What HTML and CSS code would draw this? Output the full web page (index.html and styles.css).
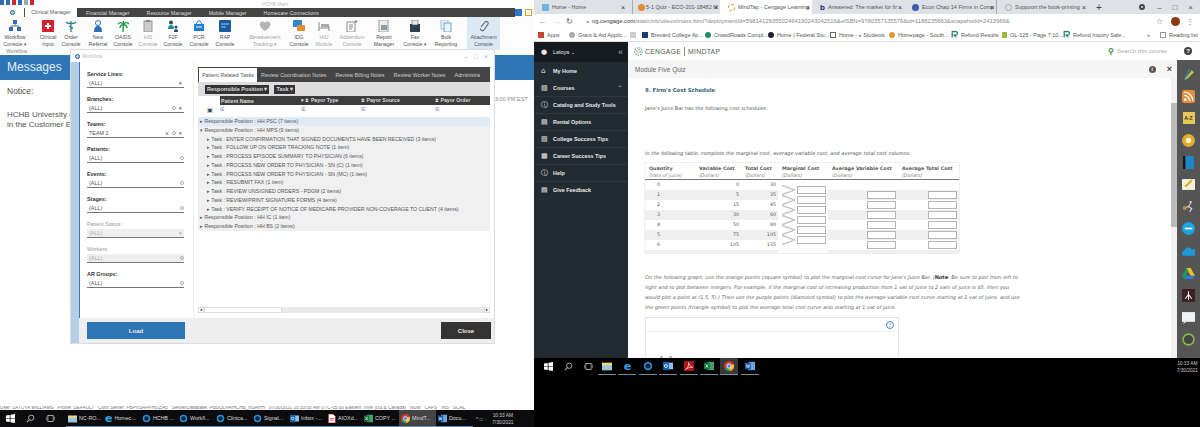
FILE: index.html
```html
<!DOCTYPE html>
<html lang="en">
<head>
    <meta charset="utf-8">
    <title>Workflow and MindTap</title>
    <link rel="stylesheet" href="styles.css">
</head>
<body>
    <svg class="defs">
        <symbol id="win" viewBox="0 0 12 12"><path d="M0 2l5-.8V5.600H0zM6 1l6-1v5.600H6zM0 6.400h5v4.400L0 10zM6 6.400h6V12l-6-1z" fill="#fff"/></symbol>
        <symbol id="search" viewBox="0 0 12 12"><circle cx="7" cy="5" r="3.500" fill="none" stroke="#bbb" stroke-width="1.200"/><path d="M4.500 7.500L1 11" stroke="#bbb" stroke-width="1.400"/></symbol>
        <symbol id="taskview" viewBox="0 0 12 12"><rect x="2.500" y="2" width="7" height="8" fill="none" stroke="#ccc"/><path d="M.5 3.500v5M11.500 3.500v5" stroke="#999"/></symbol>
        <symbol id="ring" viewBox="0 0 12 12"><circle cx="6" cy="6" r="4" fill="#06243c" stroke="#2b8fd8" stroke-width="2"/></symbol>
        <symbol id="outlook" viewBox="0 0 12 12"><rect x="4" y="2" width="8" height="8" fill="#8fc1ea"/><rect y="1" width="7" height="10" fill="#0f62ab"/><circle cx="3.500" cy="6" r="1.800" fill="none" stroke="#fff"/></symbol>
        <symbol id="word" viewBox="0 0 12 12"><rect x="4" y="1" width="8" height="10" fill="#67a7e4"/><rect y="2" width="7" height="8" fill="#1a56a8"/><path d="M1.500 4l1 4 1-3 1 3 1-4" stroke="#fff" stroke-width=".7" fill="none"/></symbol>
        <symbol id="excel" viewBox="0 0 12 12"><rect x="4" y="1" width="8" height="10" fill="#3fa06a"/><rect y="2" width="7" height="8" fill="#14743d"/><path d="M2 4l3 4M5 4L2 8" stroke="#fff" stroke-width=".8"/></symbol>
        <symbol id="pdf" viewBox="0 0 12 12"><rect width="12" height="12" rx="1" fill="#b01116"/><path d="M2 10c3-2 4-5 3.500-8C6 5 8 7 10.500 7.500 7 7.500 4 8.500 2 10z" fill="none" stroke="#fff" stroke-width=".8"/></symbol>
        <symbol id="chrome" viewBox="0 0 12 12"><circle cx="6" cy="6" r="6" fill="#d8372b"/><path d="M6 6L1 9a6 6 0 0 0 6 3z" fill="#2ea24c"/><path d="M6 6l5.500-2.500A6 6 0 0 1 7 12z" fill="#f6c026"/><circle cx="6" cy="6" r="2.600" fill="#4285f4" stroke="#fff"/></symbol>
        <symbol id="files" viewBox="0 0 12 12"><rect y="2" width="12" height="9" fill="#f1d77b"/><rect y="5" width="12" height="6" fill="#9cc6dd"/></symbol>
        <symbol id="doc" viewBox="0 0 12 12"><path d="M2 0h6l3 3v9H2z" fill="#fff" stroke="#c0392b"/><path d="M4 6h5M4 8h5" stroke="#c0392b"/></symbol>
        <symbol id="refund" viewBox="0 0 12 12"><path d="M2 11V1h6a3 3 0 0 1 0 6H5l4 4" fill="none" stroke="#1c7a64" stroke-width="2"/></symbol>
        <symbol id="chev" viewBox="0 0 14 10"><path d="M0 0l14 5L0 10" fill="none" stroke="#c8c8c8" stroke-width="1.600"/></symbol>
    </svg>

    <div class="screen-left">
        <div class="app-title">
            <div class="quick-icons">
                <i class="q-blue"></i><i class="q-blue"></i><i class="q-red"></i><i class="q-blue"></i><i class="q-gray"></i><i class="q-red"></i>
            </div>
            <span class="app-name">HCHB Main</span>
        </div>
        <div class="menu-row">
            <div class="menu-logo"><span class="logo-ring"></span></div>
            <div class="menu-tabs">
                <span class="menu-tab active">Clinical Manager</span>
                <span class="menu-tab">Financial Manager</span>
                <span class="menu-tab">Resource Manager</span>
                <span class="menu-tab">Mobile Manager</span>
                <span class="menu-tab">Homecare Connections</span>
            </div>
            <div class="menu-end"><i class="end-blue"></i><i class="end-orange"></i></div>
        </div>

        <div class="ribbon">
            <div class="rib-item w-workflow">
                <svg viewBox="0 0 12 12"><rect x="4" y="0" width="4" height="4" fill="#2f6db5"/><rect x="0" y="7" width="4" height="4" fill="#2f6db5"/><rect x="8" y="7" width="4" height="4" fill="#2f6db5"/><path d="M6 4v2M2 7V6h8v1" stroke="#6a7a8a" fill="none"/></svg>
                <span>Workflow<br>Console ▾</span>
            </div>
            <div class="rib-item w-clinical">
                <svg viewBox="0 0 12 12"><rect width="12" height="12" rx="1" fill="#d6202e"/><path d="M6 3v6M3 6h6" stroke="#fff" stroke-width="2"/></svg>
                <span>Clinical<br>Input</span>
            </div>
            <div class="rib-item w-order">
                <svg viewBox="0 0 12 12"><path d="M6 1v11M1 2c2 2 3 2 5 1 2 1 3 1 5-1M4 6c2 1 2 2 4 2" stroke="#2d7f8f" stroke-width="1.300" fill="none"/></svg>
                <span>Order<br>Console</span>
            </div>
            <div class="rib-item w-referral">
                <svg viewBox="0 0 12 12"><circle cx="6" cy="3" r="2.500" fill="#fff" stroke="#2c6fb3"/><path d="M2 12c0-5 2-6 4-6s4 1 4 6z" fill="#2c6fb3"/></svg>
                <span>New<br>Referral</span>
            </div>
            <div class="rib-item w-oasis">
                <svg viewBox="0 0 12 12"><path d="M6 12c0-3 0-5 .5-7M6.500 5C5 2 3 2 1 4M6.500 5C8 2 10 2 12 4M6.500 5C5 4 3 6 3 8M6.500 5C8 4 10 6 10 8M6.500 5V1" stroke="#1f9e48" stroke-width="1.400" fill="none"/></svg>
                <span>OASIS<br>Console</span>
            </div>
            <div class="rib-item w-his muted">
                <svg viewBox="0 0 12 12"><rect x="2" y="1" width="8" height="11" fill="#ccc" stroke="#999"/><rect x="4" y="0" width="4" height="2" fill="#888"/></svg>
                <span>HIS<br>Console</span>
            </div>
            <div class="rib-item w-f2f">
                <svg viewBox="0 0 12 12"><circle cx="4" cy="2.500" r="2" fill="#2b4a6b"/><path d="M1 9c0-3 1-4 3-4s3 1 3 4z" fill="#2b8a8f"/><circle cx="9" cy="7" r="1.500" fill="#2b4a6b"/><path d="M7 12c0-2 .5-3 2-3s2 1 2 3z" fill="#2b4a6b"/></svg>
                <span>F2F<br>Console</span>
            </div>
            <div class="rib-item w-pcr">
                <svg viewBox="0 0 12 12"><rect x="1" y="4" width="10" height="7" fill="#1f7fd1"/><path d="M3 4l2-3h2l2 3" stroke="#1f7fd1" fill="none"/><path d="M3 7h6" stroke="#fff"/></svg>
                <span>PCR<br>Console</span>
            </div>
            <div class="rib-item w-rap">
                <svg viewBox="0 0 12 12"><rect width="12" height="12" rx="1" fill="#1b5b9b"/><path d="M2 4h8M2 7h5" stroke="#8fd0ff"/></svg>
                <span>RAP<br>Console</span>
            </div>
            <div class="rib-item w-bereave muted">
                <svg viewBox="0 0 12 12"><path d="M6 11C2 8 0 6 1 3c1-2 4-2 5 0 1-2 4-2 5 0 1 3-1 5-5 8z" fill="#b4b4b4"/></svg>
                <span>Bereavement<br>Tracking ▾</span>
            </div>
            <div class="rib-item w-idg">
                <svg viewBox="0 0 12 12"><rect y="0" width="9" height="7" rx="1" fill="#2b86d4"/><rect x="4" y="5" width="8" height="6" rx="1" fill="#e58a2e"/></svg>
                <span>IDG<br>Console</span>
            </div>
            <div class="rib-item w-hiu muted">
                <svg viewBox="0 0 12 12"><path d="M1 2v9M11 6v5M1 8h10" stroke="#888" fill="none"/><rect x="3" y="4" width="8" height="3" fill="#aaa"/></svg>
                <span>HIU<br>Module</span>
            </div>
            <div class="rib-item w-addendum muted">
                <svg viewBox="0 0 12 12"><rect x="1" y="2" width="8" height="10" fill="#fff" stroke="#888"/><path d="M3 5h4M3 7h4M3 9h3M10 0v3M8.500 1.500h3" stroke="#888"/></svg>
                <span>Addendum<br>Console</span>
            </div>
            <div class="rib-item w-report">
                <svg viewBox="0 0 12 12"><rect x="1" y="0" width="9" height="12" fill="#eee" stroke="#999"/><rect x="3" y="5" width="6" height="5" fill="#8a9aa0"/></svg>
                <span>Report<br>Manager</span>
            </div>
            <div class="rib-item w-fax">
                <svg viewBox="0 0 12 12"><rect x="1" y="4" width="10" height="8" fill="#2d4050"/><rect x="3" y="0" width="6" height="5" fill="#e3e8ec" stroke="#2d4050" stroke-width=".5"/></svg>
                <span>Fax<br>Console ▾</span>
            </div>
            <div class="rib-item w-bulk">
                <svg viewBox="0 0 12 12"><rect x="1" y="0" width="7" height="9" fill="#eaf3f9" stroke="#9ac4de"/><rect x="4" y="3" width="7" height="9" fill="#eaf3f9" stroke="#6fa8cc"/></svg>
                <span>Bulk<br>Reporting</span>
            </div>
            <div class="rib-item w-attach selected">
                <svg viewBox="0 0 12 12"><path d="M3 7l4-5c1-1.500 4 0 3 2L6 10c-1 1.500-4 .5-3.500-1.500" stroke="#667" stroke-width="1.200" fill="none"/></svg>
                <span>Attachment<br>Console</span>
            </div>
            <span class="rib-group">Workflow</span>
        </div>

        <div class="message-bar">Messages</div>
        <div class="message-body">
            <p class="notice">Notice:</p>
            <p class="notice-text">HCHB University re<br>in the Customer E</p>
            <span class="notice-time">3:00 PM EST</span>
        </div>
        <div class="status-line">User: LATOYA WILLIAMS &nbsp; Profile: DEFAULT &nbsp; Citrix Server: PBPVSAPPH01545 &nbsp; Server/Database: PBSQLN4/HCHB_NSAHH &nbsp; 07/30/2021 10:33:05 AM UTC-05:00 Eastern Time (US &amp; Canada) &nbsp; NUM &nbsp; CAPS &nbsp; INS &nbsp; SCRL</div>
        <div class="taskbar-left">
            <svg class="tb-sys"><use href="#win"/></svg>
            <svg class="tb-sys"><use href="#search"/></svg>
            <svg class="tb-sys"><use href="#taskview"/></svg>
            <div class="tb-btn"><svg><use href="#files"/></svg>NC-RO...</div>
            <div class="tb-btn"><b class="ie">e</b>Homec...</div>
            <div class="tb-btn"><svg><use href="#ring"/></svg>HCHB ...</div>
            <div class="tb-btn"><svg><use href="#ring"/></svg>Workfl...</div>
            <div class="tb-btn"><svg><use href="#ring"/></svg>Clinica...</div>
            <div class="tb-btn"><svg><use href="#ring"/></svg>Signal...</div>
            <div class="tb-btn"><svg><use href="#outlook"/></svg>Inbox -...</div>
            <div class="tb-btn"><svg><use href="#doc"/></svg>AIOXd...</div>
            <div class="tb-btn"><svg><use href="#excel"/></svg>COPY ...</div>
            <div class="tb-btn on"><svg><use href="#chrome"/></svg>MindT...</div>
            <div class="tb-btn"><svg><use href="#word"/></svg>Docu...</div>
            <div class="tray">^ &#9633; &#9676;</div>
            <div class="clock">10:33 AM<br>7/30/2021</div>
        </div>

        <!-- floating Workflow window -->
        <div class="dialog">
            <div class="dlg-title">
                <span class="logo-ring"></span><span class="dlg-name">Workflow</span>
                <span class="dlg-btns">&#8211;&nbsp;&nbsp;&nbsp;&#9633;&nbsp;&nbsp;&nbsp;&#215;</span>
            </div>
            <div class="dlg-body">
                <div class="dlg-main">
                    <div class="dlg-cols">
                        <div class="filters">
                            <div class="field"><label>Service Lines:</label><div class="input"><span>(ALL)</span><em>▾</em></div></div>
                            <div class="field"><label>Branches:</label><div class="input"><span>(ALL)</span><u></u><em>▾</em></div></div>
                            <div class="field"><label>Teams:</label><div class="input"><span>TEAM 2</span><s>&#215;</s><u></u><em>▾</em></div></div>
                            <div class="field"><label>Patients:</label><div class="input"><span>(ALL)</span><u></u></div></div>
                            <div class="field"><label>Events:</label><div class="input"><span>(ALL)</span><u></u></div></div>
                            <div class="field"><label>Stages:</label><div class="input"><span>(ALL)</span><u></u></div></div>
                            <div class="field off"><label>Patient Status:</label><div class="input"><span>(ALL)</span><em>▾</em></div></div>
                            <div class="field off"><label>Workers:</label><div class="input"><span>(ALL)</span><u></u></div></div>
                            <div class="field"><label>AR Groups:</label><div class="input"><span>(ALL)</span><u></u></div></div>
                        </div>
                        <div class="grid-pane">
                            <div class="pane-tabs">
                                <span class="pane-tab active">Patient Related Tasks</span>
                                <span class="pane-tab">Review Coordination Notes</span>
                                <span class="pane-tab">Review Billing Notes</span>
                                <span class="pane-tab">Review Worker Notes</span>
                                <span class="pane-tab">Administra</span>
                            </div>
                            <div class="chips"><span class="chip">Responsible Position ▾</span><span class="chip">Task ▾</span></div>
                            <div class="grid-head">
                                <span class="c1">Patient Name</span>
                                <span class="c2">▾ ⧗ Payor Type</span>
                                <span class="c3">⧗ Payor Source</span>
                                <span class="c4">⧗ Payor Order</span>
                            </div>
                            <div class="grid-filter">
                                <span class="c0">&#9635;</span>
                                <span class="c1">IE</span><span class="c2">IE</span><span class="c3">IE</span><span class="c4">IE</span>
                            </div>
                            <div class="rows">
                                <div class="row pos sel">▸ Responsible Position : HH PSC (7 items)</div>
                                <div class="row pos">▾ Responsible Position : HH MPS (9 items)</div>
                                <div class="row task">▸ Task : ENTER CONFIRMATION THAT SIGNED DOCUMENTS HAVE BEEN RECEIVED (3 items)</div>
                                <div class="row task">▸ Task : FOLLOW UP ON ORDER TRACKING NOTE (1 item)</div>
                                <div class="row task">▸ Task : PROCESS EPISODE SUMMARY TO PHYSICIAN (6 items)</div>
                                <div class="row task">▸ Task : PROCESS NEW ORDER TO PHYSICIAN - SN (C) (1 item)</div>
                                <div class="row task">▸ Task : PROCESS NEW ORDER TO PHYSICIAN - SN (MC) (1 item)</div>
                                <div class="row task">▸ Task : RESUBMIT FAX (1 item)</div>
                                <div class="row task">▸ Task : REVIEW UNSIGNED ORDERS - PDGM (2 items)</div>
                                <div class="row task">▸ Task : REVIEW/PRINT SIGNATURE FORMS (4 items)</div>
                                <div class="row task">▸ Task : VERIFY RECEIPT OF NOTICE OF MEDICARE PROVIDER NON-COVERAGE TO CLIENT (4 items)</div>
                                <div class="row pos">▸ Responsible Position : HH IC (1 item)</div>
                                <div class="row pos">▸ Responsible Position : HH BS (2 items)</div>
                            </div>
                            <div class="hscroll"><i>◂</i><b></b><i>▸</i></div>
                        </div>
                    </div>
                    <div class="dlg-foot">
                        <button class="btn-load">Load</button>
                        <button class="btn-close">Close</button>
                    </div>
                </div>
            </div>
        </div>
    </div>

    <div class="screen-right">
        <div class="browser">
            <div class="tabstrip">
                <div class="btab t1"><i class="fav fav-blue"></i>Home - Home<b>&#215;</b></div>
                <div class="btab t2"><i class="fav fav-orange"></i>5-1 Quiz - ECO-201-18482 M<b>&#215;</b></div>
                <div class="btab t3 active"><i class="fav fav-cengage"></i>MindTap - Cengage Learning<b>&#215;</b></div>
                <div class="btab t4"><span class="fav-b">b</span>Answered: The market for fir<b>&#215;</b></div>
                <div class="btab t5"><i class="fav fav-q"></i>Econ Chap 14 Firms in Comp<b>&#215;</b></div>
                <div class="btab t6"><i class="fav fav-g"></i>Suppoort the book-printing<b>&#215;</b></div>
                <span class="newtab">+</span>
                <div class="winbtns"><i class="rec"></i><span>&#8211;</span><span>&#9633;</span><span>&#215;</span></div>
            </div>
            <div class="addrbar">
                <span class="nav">&#8592;</span><span class="nav dim">&#8594;</span><span class="nav">&#8635;</span>
                <span class="lock">&#9679;</span>
                <span class="url"><b>ng.cengage.com</b>/static/nb/ui/evo/index.html?deploymentId=5981412935502464190243042516&amp;eISBN=9780357135576&amp;id=1188235663&amp;snapshotId=2413969&amp;</span>
                <span class="star">&#9734;</span><i class="avatar"></i><span class="dots">&#8942;</span>
            </div>
            <div class="bookmarks">
                <span class="bm b-apps"><i class="apps-ic"></i>Apps</span>
                <span class="bm b-grant"><i class="dot d-gray"></i>Grant &amp; Aid Applic...</span>
                <span class="bm b-folder"><i class="dot d-folder"></i></span>
                <span class="bm b-brevard"><i class="dot d-navy"></i>Brevard College Ap...</span>
                <span class="bm b-crowd"><i class="dot d-green"></i>CrowdRoads Compl...</span>
                <span class="bm b-fed"><i class="dot d-dark"></i>Home | Federal Stu...</span>
                <span class="bm b-stud"><i class="dot d-page"></i>Home - « Students</span>
                <span class="bm b-south"><i class="dot d-orange"></i>Homepage - South...</span>
                <span class="bm b-ref"><svg><use href="#refund"/></svg>Refund Results</span>
                <span class="bm b-ol"><i class="dot d-lime"></i>OL-125 - Page 7:10...</span>
                <span class="bm b-inq"><svg><use href="#refund"/></svg>Refund Inquiry Sale...</span>
                <span class="bm b-more">»</span>
                <span class="bm b-read"><i class="dot d-read"></i>Reading list</span>
            </div>
            <div class="mindtap">
                <div class="side">
                    <div class="side-user"><span class="side-ic">&#9679;</span><span class="user-name">Latoya &#8964;</span><span class="collapse">«</span></div>
                    <div class="side-item"><span class="side-ic">&#8962;</span>My Home</div>
                    <div class="side-item"><span class="side-ic">&#9639;</span>Courses<span class="caret">&#8964;</span></div>
                    <div class="side-item"><span class="side-ic">&#9432;</span>Catalog and Study Tools</div>
                    <div class="side-item"><span class="side-ic">&#9636;</span>Rental Options</div>
                    <div class="side-item"><span class="side-ic">&#9639;</span>College Success Tips</div>
                    <div class="side-item"><span class="side-ic">&#9638;</span>Career Success Tips</div>
                    <div class="side-item"><span class="side-ic">&#9432;</span>Help</div>
                    <div class="side-item"><span class="side-ic">&#9636;</span>Give Feedback</div>
                </div>
                <div class="mt-main">
                    <div class="mt-head">
                        <svg class="cg-logo" viewBox="0 0 12 12"><g fill="none" stroke-width="1.400" stroke-dasharray="2 1.400"><circle cx="6" cy="6" r="5" stroke="#2d9fc4"/><circle cx="6" cy="6" r="2.500" stroke="#e58a2e"/></g></svg>
                        <span class="cg-name">CENGAGE</span><span class="cg-sep"></span><span class="cg-name">MINDTAP</span>
                        <span class="mt-search"><i>&#9906;</i>Search this course</span>
                        <span class="mt-help">?</span>
                    </div>
                    <div class="mt-row">
                        <div class="mt-content">
                            <div class="quiz-bar"><span>Module Five Quiz</span><b class="info">i</b><b class="closex">&#215;</b></div>
                            <div class="quiz-wrap">
                                <div class="quiz">
                                    <h3>9. Firm's Cost Schedule</h3>
                                    <p class="lead">Jane's Juice Bar has the following cost schedules:</p>
                                    <p class="instr">In the following table, complete the marginal cost, average variable cost, and average total cost columns.</p>
                                    <div class="cost">
                                        <div class="cost-head">
                                            <span><b>Quantity</b><br><i>(Vats of juice)</i></span>
                                            <span><b>Variable Cost</b><br><i>(Dollars)</i></span>
                                            <span><b>Total Cost</b><br><i>(Dollars)</i></span>
                                            <span><b>Marginal Cost</b><br><i>(Dollars)</i></span>
                                            <span><b>Average Variable Cost</b><br><i>(Dollars)</i></span>
                                            <span><b>Average Total Cost</b><br><i>(Dollars)</i></span>
                                        </div>
                                        <div class="cost-body">
                                            <div class="col qty"><span>0</span><span>1</span><span>2</span><span>3</span><span>4</span><span>5</span><span>6</span></div>
                                            <div class="col num"><span>0</span><span>5</span><span>15</span><span>30</span><span>50</span><span>75</span><span>105</span></div>
                                            <div class="col num"><span>30</span><span>35</span><span>45</span><span>60</span><span>80</span><span>105</span><span>135</span></div>
                                            <div class="col marg">
                                                <div class="marg-cell"><svg><use href="#chev"/></svg><i class="box"></i></div>
                                                <div class="marg-cell"><svg><use href="#chev"/></svg><i class="box"></i></div>
                                                <div class="marg-cell"><svg><use href="#chev"/></svg><i class="box"></i></div>
                                                <div class="marg-cell"><svg><use href="#chev"/></svg><i class="box"></i></div>
                                                <div class="marg-cell"><svg><use href="#chev"/></svg><i class="box"></i></div>
                                                <div class="marg-cell"><svg><use href="#chev"/></svg><i class="box"></i></div>
                                            </div>
                                            <div class="col boxes avc"><i class="box"></i><i class="box"></i><i class="box"></i><i class="box"></i><i class="box"></i><i class="box"></i></div>
                                            <div class="col boxes atc"><i class="box"></i><i class="box"></i><i class="box"></i><i class="box"></i><i class="box"></i><i class="box"></i></div>
                                        </div>
                                    </div>
                                    <p class="graph-text">On the following graph, use the orange points (square symbol) to plot the marginal-cost curve for Jane's Juice Bar. (<b>Note</b>: Be sure to plot from left to right and to plot between integers. For example, if the marginal cost of increasing production from 1 vat of juice to 2 vats of juice is $5, then you would plot a point at (1.5, 5).) Then use the purple points (diamond symbol) to plot the average-variable cost curve starting at 1 vat of juice, and use the green points (triangle symbol) to plot the average-total-cost curve also starting at 1 vat of juice.</p>
                                    <div class="graph-box">
                                        <div class="graph-top"><span class="graph-help">?</span></div>
                                        <div class="graph-plot"><i></i><i></i></div>
                                    </div>
                                </div>
                                <div class="vscroll"><b></b></div>
                            </div>
                        </div>
                        <div class="rail">
                            <svg viewBox="0 0 12 12"><path d="M2 11L9 2l2 2-6 6z" fill="#b7c93a"/><path d="M2 11L7 1" stroke="#3a8ed0"/></svg>
                            <svg viewBox="0 0 12 12"><rect width="12" height="12" rx="2" fill="#e58d3b"/><circle cx="3" cy="9" r="1.300" fill="#fff"/><path d="M2 5a5 5 0 0 1 5 5M2 2a8 8 0 0 1 8 8" stroke="#fff" stroke-width="1.300" fill="none"/></svg>
                            <span class="az">A-Z</span>
                            <svg viewBox="0 0 12 12"><circle cx="6" cy="6" r="6" fill="#e2ac2f"/><circle cx="6" cy="6" r="2.500" fill="#fff3c8"/></svg>
                            <svg viewBox="0 0 12 12"><rect x="3" width="8" height="12" fill="#1d86c9"/><rect x="1" width="2" height="12" fill="#111"/></svg>
                            <svg viewBox="0 0 12 12"><rect y="1" width="12" height="10" fill="#f5f1dc"/><path d="M3 8l6-6" stroke="#d6ad25" stroke-width="2"/></svg>
                            <svg viewBox="0 0 12 12"><circle cx="8" cy="2" r="1" fill="#ddd"/><path d="M8 3L6 6l3 2-2 3M6 6L3 7" stroke="#ddd" fill="none"/><rect x="1" y="6" width="3" height="3" fill="#c9952c"/></svg>
                            <svg viewBox="0 0 12 12"><circle cx="6" cy="6" r="6" fill="#1ba4e3"/><path d="M2.500 6h7" stroke="#fff" stroke-width="1.500"/></svg>
                            <svg viewBox="0 0 12 12"><path d="M1 10a3 3 0 0 1 1-5 4 4 0 0 1 7-1 3 3 0 0 1 2 6z" fill="#1d9ad6"/></svg>
                            <svg viewBox="0 0 12 12"><path d="M4 1h4l4 7H8z" fill="#f4c020"/><path d="M4 1L0 8l2 3 4-7z" fill="#1c9b5b"/><path d="M2 11h8l2-3H4z" fill="#2f7de1"/></svg>
                            <svg viewBox="0 0 12 12"><rect width="12" height="12" rx="1" fill="#3b2325"/><path d="M6 2v8M3 9l3-4 3 4" stroke="#eee" fill="none"/></svg>
                            <svg viewBox="0 0 12 12"><rect y="1" width="12" height="9" fill="#eef0f1"/><path d="M2 10l-1 2 3-2" fill="#eef0f1"/></svg>
                            <svg viewBox="0 0 12 12"><circle cx="6" cy="6" r="5" fill="#444" stroke="#88b944" stroke-width="1.500"/></svg>
                        </div>
                    </div>
                </div>
            </div>
        </div>
        <div class="taskbar-right">
            <div class="tr-icons">
                <svg class="sys"><use href="#win"/></svg>
                <svg class="sys"><use href="#search"/></svg>
                <svg class="sys"><use href="#taskview"/></svg>
                <div class="tr-app"><svg><use href="#files"/></svg></div>
                <div class="tr-app"><b class="ie">e</b></div>
                <div class="tr-app"><svg><use href="#ring"/></svg></div>
                <div class="tr-app"><svg><use href="#outlook"/></svg></div>
                <div class="tr-app"><svg><use href="#pdf"/></svg></div>
                <div class="tr-app"><svg><use href="#excel"/></svg></div>
                <div class="tr-app on"><svg><use href="#chrome"/></svg></div>
                <div class="tr-app"><svg><use href="#word"/></svg></div>
            </div>
            <div class="clock">10:33 AM<br>7/30/2021</div>
        </div>
    </div>
</body>
</html>
```

FILE: styles.css
```css
body {
    margin: 0;
    width: 1200px;
    height: 427px;
    display: flex;
    overflow: hidden;
    background-color: #000;
    font-family: "Liberation Sans", Arial, sans-serif;
}
p, h3 {
    margin: 0;
}
.defs {
    display: none;
}

/* left monitor */
.screen-left {
    width: 534px;
    height: 427px;
    flex-shrink: 0;
    position: relative;
    display: flex;
    flex-direction: column;
    background-color: white;
}
.app-title {
    height: 8px;
    display: flex;
    align-items: center;
    justify-content: center;
    position: relative;
    flex-shrink: 0;
}
.app-name {
    font-size: 5px;
    color: #bbb;
    margin-left: 16px;
}
.quick-icons {
    display: flex;
    gap: 2px;
    position: absolute;
    left: 0;
    top: 0;
}
.quick-icons i {
    width: 4px;
    height: 5px;
}
.q-blue { background-color: #2c6fb3; }
.q-red { background-color: #cf2433; }
.q-gray { background-color: #9aa; }

.menu-row {
    height: 9px;
    display: flex;
    flex-shrink: 0;
}
.menu-logo {
    width: 24px;
    display: flex;
    justify-content: center;
    align-items: center;
}
.logo-ring {
    width: 5px;
    height: 5px;
    border: 1px solid #1f5f9f;
    border-radius: 50%;
    box-sizing: border-box;
    display: inline-block;
    background-color: #bcd;
}
.menu-tabs {
    flex: 1;
    display: flex;
    background-color: #444;
    font-size: 5.3px;
    color: #ddd;
    align-items: center;
    height: 9px;
}
.menu-tab {
    margin-right: 17px;
    white-space: nowrap;
}
.menu-tab.active {
    background-color: white;
    color: #555;
    height: 9px;
    line-height: 9px;
    width: 53px;
    margin-right: 9px;
    text-align: center;
    border-left: 1px solid #555;
    box-sizing: border-box;
}
.menu-end {
    width: 19px;
    display: flex;
    gap: 3px;
    align-items: center;
}
.menu-end i {
    width: 7px;
    height: 7px;
}
.end-blue { background-color: #2a78c8; }
.end-orange { border: 1px solid #e0a030; box-sizing: border-box; }

.ribbon {
    height: 38px;
    flex-shrink: 0;
    display: flex;
    position: relative;
    font-size: 5.2px;
    color: #555;
    text-align: center;
    background-color: #fcfcfc;
}
.rib-item {
    height: 33px;
    box-sizing: border-box;
    padding-top: 3px;
    display: flex;
    flex-direction: column;
    align-items: center;
    flex-shrink: 0;
}
.rib-item svg {
    width: 12px;
    height: 12px;
    margin-bottom: 2px;
}
.rib-item span {
    line-height: 7px;
    white-space: nowrap;
}
.rib-item.muted span {
    color: #a5a5a5;
}
.rib-item.selected {
    background-color: #dbe9f5;
}
.w-workflow { width: 30px; }
.w-clinical { width: 22px; margin-left: 7px; }
.w-order { width: 22px; margin-left: 1px; }
.w-referral { width: 24px; margin-left: 4px; }
.w-oasis { width: 24px; margin-left: 1px; }
.w-his { width: 24px; margin-left: 1px; }
.w-f2f { width: 24px; margin-left: 1px; }
.w-pcr { width: 24px; margin-left: 2px; }
.w-rap { width: 24px; margin-left: 2px; }
.w-bereave { width: 36px; margin-left: 10px; }
.w-idg { width: 24px; margin-left: 4px; }
.w-hiu { width: 24px; margin-left: 1px; }
.w-addendum { width: 28px; margin-left: 2px; }
.w-report { width: 26px; margin-left: 5px; }
.w-fax { width: 26px; margin-left: 5px; }
.w-bulk { width: 28px; margin-left: 4px; }
.w-attach { width: 33px; margin-left: 7px; }
.rib-group {
    position: absolute;
    left: 6px;
    top: 31px;
    color: #888;
}

.message-bar {
    height: 25px;
    flex-shrink: 0;
    background-color: #2e75b6;
    color: #e6eef6;
    font-size: 12px;
    line-height: 25px;
    padding-left: 7px;
}
.message-body {
    flex: 1;
    padding: 6px 7px;
    color: #555;
    font-size: 7.5px;
    position: relative;
}
.notice {
    font-size: 8.5px;
    margin-bottom: 14px;
}
.notice-text {
    line-height: 10px;
    font-size: 8px;
}
.notice-time {
    position: absolute;
    left: 495px;
    top: 16px;
    font-size: 5.5px;
    color: #888;
    white-space: nowrap;
}
.status-line {
    height: 4px;
    font-size: 4.7px;
    line-height: 4px;
    color: #777;
    white-space: nowrap;
    overflow: hidden;
    flex-shrink: 0;
}
.taskbar-left {
    height: 17px;
    flex-shrink: 0;
    background-color: #0c0c0e;
    display: flex;
    align-items: center;
    color: #ddd;
    font-size: 5.3px;
    padding-left: 6px;
    box-sizing: border-box;
}
.tb-sys {
    width: 9px;
    height: 9px;
    margin-right: 11px;
    flex-shrink: 0;
}
.tb-btn {
    width: 37px;
    height: 17px;
    box-sizing: border-box;
    flex-shrink: 0;
    display: flex;
    align-items: center;
    gap: 2px;
    padding-left: 2px;
    border-bottom: 1px solid #5f8fb5;
    white-space: nowrap;
    overflow: hidden;
}
.tb-btn svg {
    width: 9px;
    height: 9px;
    flex-shrink: 0;
}
.tb-btn.on {
    background-color: #444;
}
.ie {
    color: #37a3e0;
    font-size: 11px;
    line-height: 11px;
    font-weight: bold;
    font-family: "DejaVu Sans", sans-serif;
}
.tray {
    margin-left: 3px;
    font-size: 5px;
    color: #ccc;
    white-space: nowrap;
    flex-shrink: 0;
}
.clock {
    font-size: 4.8px;
    line-height: 7px;
    color: #ccc;
    text-align: center;
    white-space: nowrap;
}
.taskbar-left .clock {
    margin-left: 5px;
}

/* Workflow window */
.dialog {
    position: absolute;
    left: 71px;
    top: 50px;
    width: 423px;
    height: 293px;
    background-color: white;
    box-shadow: 0 0 0 1px #d9dde2;
    display: flex;
    flex-direction: column;
}
.dlg-title {
    height: 12px;
    display: flex;
    align-items: center;
    padding-left: 4px;
    gap: 2px;
    font-size: 5px;
    color: #bbb;
    flex-shrink: 0;
}
.dlg-btns {
    margin-left: auto;
    margin-right: 6px;
    font-size: 7px;
    color: #b5b5b5;
}
.dlg-body {
    flex: 1;
    display: flex;
    min-height: 0;
    border-left: 8px solid #b5cde6;
    box-shadow: inset 1px 0 0 #3b7abb;
}
.dlg-main {
    flex: 1;
    display: flex;
    flex-direction: column;
    min-width: 0;
}
.dlg-cols {
    flex: 1;
    display: flex;
    min-height: 0;
}
.filters {
    width: 115px;
    box-sizing: border-box;
    flex-shrink: 0;
    padding: 7px 9px 0 8px;
    border-right: 1px solid #eee;
}
.field {
    height: 25px;
    font-size: 5.4px;
    color: #333;
}
.field label {
    display: block;
    height: 10px;
    line-height: 10px;
    font-weight: bold;
}
.input {
    height: 9px;
    box-sizing: border-box;
    border-bottom: 1px solid #777;
    display: flex;
    align-items: center;
    padding-left: 2px;
    gap: 3px;
    color: #555;
}
.input span {
    flex: 1;
}
.input em {
    font-style: normal;
    font-size: 5px;
    width: 5px;
}
.input s {
    text-decoration: none;
    font-size: 7px;
    color: #666;
}
.input u {
    width: 4px;
    height: 4px;
    border: 1px solid #aaa;
    border-radius: 50%;
    box-sizing: border-box;
    flex-shrink: 0;
}
.field.off label {
    color: #999;
    font-weight: normal;
}
.field.off .input {
    background-color: #eee;
    color: #aaa;
}

.grid-pane {
    flex: 1;
    min-width: 0;
    padding: 5px 4px 0 4px;
    display: flex;
    flex-direction: column;
    font-size: 5.2px;
}
.pane-tabs {
    height: 15px;
    background-color: #444;
    color: #ccc;
    display: flex;
    align-items: center;
    font-size: 5.4px;
    white-space: nowrap;
    overflow: hidden;
    flex-shrink: 0;
}
.pane-tab {
    margin-right: 9px;
}
.pane-tab.active {
    background-color: white;
    color: #555;
    height: 14px;
    line-height: 14px;
    padding: 0 3px;
    margin: 1px 4px 0 1px;
    box-sizing: border-box;
}
.chips {
    height: 14px;
    background-color: #ddd;
    display: flex;
    align-items: center;
    padding-left: 7px;
    gap: 5px;
    flex-shrink: 0;
}
.chip {
    background-color: #333;
    color: #ddd;
    font-weight: bold;
    font-size: 5.5px;
    height: 9px;
    line-height: 9px;
    padding: 0 2px;
    white-space: nowrap;
}
.grid-head, .grid-filter {
    height: 9px;
    display: grid;
    grid-template-columns: 22px 81px 60px 74px 1fr;
    align-items: center;
    flex-shrink: 0;
    white-space: nowrap;
}
.grid-head {
    background: linear-gradient(to right, white 22px, #3c3c3c 22px);
    color: #ddd;
    font-weight: bold;
}
.grid-head .c1 { grid-column: 2; padding-left: 1px; }
.grid-filter {
    color: #6a7fb5;
    font-size: 4.5px;
    margin-bottom: 3px;
}
.grid-filter .c0 {
    color: #345;
    font-size: 6px;
    padding-left: 9px;
}
.rows {
    flex: 1;
}
.row {
    height: 8.75px;
    line-height: 8.75px;
    white-space: nowrap;
    color: #555;
    background-color: #f0f0f0;
}
.row.pos {
    padding-left: 2px;
}
.row.sel {
    background-color: #deebf7;
}
.row.task {
    padding-left: 9px;
}
.hscroll {
    height: 6px;
    background-color: #e9e9e9;
    display: flex;
    align-items: center;
    font-size: 4px;
    margin-bottom: 5px;
    flex-shrink: 0;
}
.hscroll i {
    width: 6px;
    height: 6px;
    line-height: 6px;
    font-style: normal;
    text-align: center;
    background-color: white;
    box-shadow: inset 0 0 0 1px #ddd;
}
.hscroll b {
    width: 78px;
    height: 6px;
    box-sizing: border-box;
    background-color: white;
    border: 1px solid #ddd;
    margin-right: auto;
}
.dlg-foot {
    height: 25px;
    flex-shrink: 0;
    background-color: #eee;
    display: flex;
    justify-content: space-between;
    padding: 4px 3px 4px 8px;
    box-sizing: border-box;
}
.dlg-foot button {
    border: 0;
    padding: 0;
    font-family: inherit;
    font-size: 6px;
    font-weight: bold;
    color: #eee;
    height: 17px;
}
.btn-load {
    width: 98px;
    background-color: #2e75b6;
}
.btn-close {
    width: 50px;
    background-color: #333;
}

/* right monitor, chrome */
.screen-right {
    flex: 1;
    display: flex;
    flex-direction: column;
    min-width: 0;
}
.browser {
    height: 358px;
    flex-shrink: 0;
    display: flex;
    flex-direction: column;
    background-color: white;
    font-family: "Liberation Sans", Arial, sans-serif;
}
.tabstrip {
    height: 14px;
    background-color: #dee1e6;
    display: flex;
    align-items: center;
    font-size: 5.5px;
    color: #555;
    flex-shrink: 0;
}
.btab {
    height: 14px;
    box-sizing: border-box;
    display: flex;
    align-items: center;
    white-space: nowrap;
    overflow: hidden;
    padding-left: 5px;
    position: relative;
    flex-shrink: 0;
}
.btab b {
    position: absolute;
    right: 2px;
    font-size: 7px;
    font-weight: normal;
    color: #333;
}
.btab.active {
    background-color: white;
}
.t1 { width: 98px; }
.t1 b { right: 7px; }
.t2 { width: 88px; border-left: 1px solid #aaa; padding-left: 2px; }
.t3 { width: 92px; }
.t4 { width: 92px; }
.t5 { width: 92px; }
.t6 { width: 92px; border-left: 1px solid #aaa; }
.fav {
    width: 7px;
    height: 7px;
    margin: 0 3px 0 3px;
    flex-shrink: 0;
    border-radius: 50%;
}
.t2 .fav { margin-right: 1px; }
.fav-blue { background-color: #6fb3de; border-radius: 0; }
.fav-orange { background-color: #e58a2e; }
.fav-cengage { border: 1px dashed #e58a2e; box-sizing: border-box; }
.fav-q { background-color: #3c5dab; }
.fav-g { border: 1px solid #aaa; box-sizing: border-box; }
.fav-b {
    color: #20207a;
    font-weight: bold;
    font-size: 8px;
    margin: 0 3px;
}
.newtab {
    font-size: 10px;
    margin-left: 8px;
    color: #444;
}
.winbtns {
    margin-left: auto;
    display: flex;
    align-items: center;
    gap: 11px;
    padding-right: 7px;
    font-size: 8px;
    color: #555;
}
.rec {
    width: 6px;
    height: 6px;
    border-radius: 50%;
    border: 2px solid #444;
    box-sizing: border-box;
    margin-right: 1px;
}
.addrbar {
    height: 14px;
    flex-shrink: 0;
    display: flex;
    align-items: center;
    background-color: white;
    color: #666;
    font-size: 5.85px;
    padding-left: 5px;
    white-space: nowrap;
}
.nav {
    font-size: 8px;
    width: 13.5px;
    flex-shrink: 0;
}
.nav.dim {
    color: #bbb;
}
.lock {
    font-size: 4px;
    margin-left: 7px;
    margin-right: 3px;
}
.url {
    color: #888;
    width: 520px;
    overflow: hidden;
}
.url b {
    font-weight: normal;
    color: #333;
}
.star {
    margin-left: auto;
    font-size: 8px;
}
.avatar {
    width: 9px;
    height: 9px;
    border-radius: 50%;
    margin-left: 8px;
    background-color: #8a3a14;
}
.dots {
    font-size: 8px;
    margin: 0 6px 0 6px;
}
.bookmarks {
    height: 14px;
    flex-shrink: 0;
    display: flex;
    align-items: center;
    font-size: 5.5px;
    color: #555;
    border-bottom: 1px solid #ddd;
    box-sizing: border-box;
    white-space: nowrap;
}
.bm {
    display: flex;
    align-items: center;
    gap: 3px;
    flex-shrink: 0;
    overflow: hidden;
}
.bm svg {
    width: 7px;
    height: 7px;
}
.apps-ic {
    width: 6px;
    height: 6px;
    background-color: #c6482f;
}
.dot {
    width: 6px;
    height: 6px;
    border-radius: 50%;
}
.d-gray { background-color: #aaa; }
.d-folder { background-color: #ccc; border-radius: 0; }
.d-navy { background-color: #1e3a78; border-radius: 0; }
.d-green { background-color: #1f8f5f; }
.d-dark { background-color: #223; }
.d-page { border: 1px solid #666; box-sizing: border-box; border-radius: 0; }
.d-orange { background-color: #e5973b; }
.d-lime { background-color: #9ab93e; border-radius: 0; }
.d-read { border: 1px solid #999; box-sizing: border-box; border-radius: 0; }
.b-apps { width: 31px; padding-left: 4px; }
.b-grant { width: 61px; }
.b-folder { width: 12px; }
.b-brevard { width: 63px; }
.b-crowd { width: 63px; }
.b-fed { width: 62px; }
.b-stud { width: 59px; }
.b-south { width: 62px; }
.b-ref { width: 51px; }
.b-ol { width: 61px; }
.b-inq { width: 84px; }
.b-more { width: 13px; }

.mindtap {
    flex: 1;
    display: flex;
    min-height: 0;
}
.side {
    width: 94px;
    flex-shrink: 0;
    background-color: #212b31;
    color: #e8e8e8;
    font-size: 5.4px;
    font-weight: bold;
}
.side-user {
    height: 20px;
    background-color: #151b1f;
    display: flex;
    align-items: center;
    padding-left: 7px;
}
.user-name {
    font-weight: normal;
}
.collapse {
    margin-left: auto;
    margin-right: 5px;
    font-size: 9px;
    color: #aaa;
    font-weight: normal;
}
.side-item {
    height: 17px;
    display: flex;
    align-items: center;
    padding-left: 7px;
    white-space: nowrap;
    position: relative;
}
.side-item:nth-child(n+4) {
    border-top: 1px solid #2d383f;
    box-sizing: border-box;
}
.side-ic {
    width: 12px;
    font-size: 7px;
    flex-shrink: 0;
    font-family: "DejaVu Sans", sans-serif;
    font-weight: normal;
}
.caret {
    position: absolute;
    right: 6px;
    top: 3px;
    color: #aaa;
}
.mt-main {
    flex: 1;
    min-width: 0;
    display: flex;
    flex-direction: column;
}
.mt-head {
    height: 18px;
    flex-shrink: 0;
    display: flex;
    align-items: center;
    padding-left: 6px;
    color: #555;
}
.cg-logo {
    width: 9px;
    height: 9px;
    margin-right: 2px;
}
.cg-name {
    font-size: 6.8px;
    letter-spacing: .3px;
}
.cg-sep {
    width: 1px;
    height: 9px;
    background-color: #888;
    margin: 0 3px;
}
.mt-search {
    margin-left: auto;
    font-size: 6.05px;
    color: #aaa;
    display: flex;
    gap: 3px;
    align-items: center;
}
.mt-search i {
    font-style: normal;
    color: #3f8f4f;
    font-weight: bold;
    font-size: 8px;
}
.mt-help {
    width: 8px;
    height: 8px;
    border-radius: 50%;
    background-color: #444;
    color: white;
    font-size: 6px;
    line-height: 8px;
    text-align: center;
    font-weight: bold;
    margin: 0 8px 0 17px;
}
.mt-row {
    flex: 1;
    display: flex;
    min-height: 0;
}
.mt-content {
    flex: 1;
    min-width: 0;
    display: flex;
    flex-direction: column;
}
.quiz-bar {
    height: 18px;
    flex-shrink: 0;
    background-color: #f5f5f5;
    display: flex;
    align-items: center;
    padding-left: 7px;
    font-size: 6.5px;
    color: #666;
}
.info {
    margin-left: auto;
    width: 7px;
    height: 7px;
    border-radius: 50%;
    background-color: #555;
    color: white;
    font-size: 5px;
    line-height: 7px;
    text-align: center;
}
.closex {
    margin: 0 5px 0 11px;
    color: #444;
    font-size: 9px;
}
.quiz-wrap {
    flex: 1;
    display: flex;
    min-height: 0;
}
.quiz {
    flex: 1;
    min-width: 0;
    box-sizing: border-box;
    padding: 8px 8px 0 17px;
    font-family: "DejaVu Sans", sans-serif;
    color: #555;
    font-size: 5px;
    overflow: hidden;
}
.quiz h3 {
    font-size: 5.3px;
    line-height: 8px;
    color: #2f5f7f;
    font-weight: bold;
}
.lead {
    margin-top: 10px;
    line-height: 8px;
}
.instr {
    margin-top: 37px;
    line-height: 8px;
    font-style: italic;
}
.cost {
    width: 314px;
    margin-top: 6px;
    box-shadow: 0 0 0 1px #f0f0f0;
    font-size: 4.8px;
}
.cost-head {
    display: grid;
    grid-template-columns: 50px 46px 37px 50px 70px 61px;
    height: 17px;
    box-sizing: border-box;
    padding-top: 2px;
    line-height: 7px;
    border-bottom: 1px solid #777;
    white-space: nowrap;
}
.cost-head span {
    padding-left: 4px;
}
.cost-head i {
    color: #888;
}
.cost-body {
    display: grid;
    grid-template-columns: 50px 46px 37px 50px 70px 61px;
    height: 73px;
    background: repeating-linear-gradient(to bottom, white 0, white 10px, #efefef 10px, #efefef 20px);
}
.col {
    display: flex;
    flex-direction: column;
}
.col span {
    height: 10px;
    line-height: 10px;
}
.qty {
    padding-left: 12px;
}
.num {
    text-align: right;
    padding-right: 2px;
}
.marg {
    background-color: white;
    padding-top: 5px;
}
.marg-cell {
    height: 10px;
    display: flex;
    align-items: center;
    justify-content: flex-end;
    gap: 2px;
    padding-right: 2px;
}
.marg-cell svg {
    width: 13px;
    height: 10px;
}
.box {
    width: 29px;
    height: 8.5px;
    box-sizing: border-box;
    border: 1px solid #b5b5b5;
    background-color: white;
    display: block;
    flex-shrink: 0;
}
.boxes {
    align-items: flex-end;
    padding: 10.5px 2px 0 0;
    gap: 1.5px;
}
.graph-text {
    width: 376px;
    margin-top: 19px;
    line-height: 10px;
    font-style: italic;
    color: #666;
}
.graph-text b {
    color: #333;
    font-style: normal;
}
.graph-box {
    width: 254px;
    height: 60px;
    margin-top: 5px;
    box-sizing: border-box;
    border: 1px solid #e4e4e4;
    border-radius: 2px;
}
.graph-top {
    height: 13px;
    border-bottom: 1px solid #eee;
    display: flex;
    justify-content: flex-end;
    align-items: center;
    padding-right: 4px;
}
.graph-help {
    width: 8px;
    height: 8px;
    box-sizing: border-box;
    border: 1px solid #4a86b8;
    border-radius: 50%;
    color: #4a86b8;
    text-align: center;
    line-height: 6px;
    font-size: 5.5px;
}
.graph-plot {
    display: flex;
    gap: 6px;
    padding: 24px 0 0 14px;
}
.graph-plot i {
    width: 3px;
    height: 3px;
    background-color: #bbb;
}
.vscroll {
    width: 6px;
    flex-shrink: 0;
    background-color: #f1f1f1;
    padding-top: 25px;
    box-sizing: border-box;
}
.vscroll b {
    display: block;
    height: 124px;
    background-color: #bbb;
}
.rail {
    width: 23px;
    flex-shrink: 0;
    background-color: #555;
    display: flex;
    flex-direction: column;
    align-items: center;
    padding-top: 8px;
    gap: 9.2px;
    box-sizing: border-box;
}
.rail svg {
    width: 13px;
    height: 13px;
    flex-shrink: 0;
}
.az {
    width: 12px;
    height: 12px;
    background-color: #e5c75a;
    color: #333;
    font-size: 5px;
    line-height: 12px;
    text-align: center;
    font-weight: bold;
}

/* right monitor, taskbar */
.taskbar-right {
    height: 17px;
    flex-shrink: 0;
    background-color: #000;
    display: flex;
    align-items: center;
    justify-content: space-between;
    padding: 0 2px 0 4px;
}
.tr-icons {
    display: flex;
    align-items: center;
}
.sys {
    width: 9px;
    height: 9px;
    margin: 0 5.5px;
    flex-shrink: 0;
}
.tr-app {
    width: 18px;
    height: 17px;
    margin-right: 2.4px;
    box-sizing: border-box;
    border-bottom: 1px solid #6f8fa5;
    display: flex;
    align-items: center;
    justify-content: center;
}
.tr-app svg {
    width: 10px;
    height: 10px;
}
.tr-app.on {
    background-color: #3a3a3a;
}
```
